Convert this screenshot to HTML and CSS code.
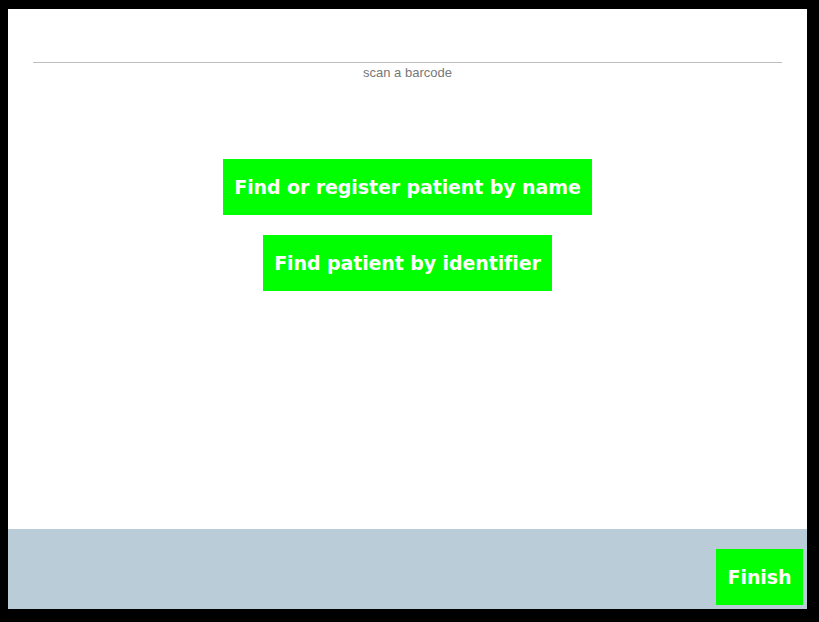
FILE: index.html
```html
<!DOCTYPE html>
<html>
<head>
<meta charset="utf-8">
<link rel="stylesheet" href="styles.css">
</head>
<body>
<div class="frame">
  <div class="main">
    <div class="scan">
      <div class="rule"></div>
      <div class="scan-label">scan a barcode</div>
    </div>
    <div class="actions">
      <button class="btn">Find or register patient by name</button>
      <button class="btn">Find patient by identifier</button>
    </div>
  </div>
  <div class="footer">
    <button class="btn btn-finish">Finish</button>
  </div>
</div>
</body>
</html>
```

FILE: styles.css
```css
html, body {
  margin: 0;
  padding: 0;
  background: #000;
  height: 100%;
}
body {
  padding: 9px 12px 13px 8px;
  box-sizing: border-box;
}
.frame {
  width: 799px;
  height: 600px;
  display: flex;
  flex-direction: column;
}
.main {
  background: #fff;
  height: 520px;
  display: flex;
  flex-direction: column;
  align-items: center;
}
.scan {
  width: 749px;
  padding-top: 53px;
  display: flex;
  flex-direction: column;
  align-items: center;
}
.rule {
  width: 100%;
  height: 1px;
  background: #bdbdbd;
}
.scan-label {
  font-family: "Liberation Sans", Arial, sans-serif;
  font-size: 13px;
  color: #777;
  line-height: 18px;
  margin-top: 1px;
}
.actions {
  margin-top: 77px;
  display: flex;
  flex-direction: column;
  align-items: center;
  gap: 20px;
}
.btn {
  background: #00ff00;
  color: #fff;
  border: none;
  height: 56px;
  padding: 0 11px;
  font-family: "DejaVu Sans", sans-serif;
  font-weight: bold;
  font-size: 19px;
  letter-spacing: -0.1px;
  margin: 0;
  cursor: pointer;
}
.footer {
  background: #bbccd9;
  height: 80px;
  display: flex;
  justify-content: flex-end;
  align-items: flex-end;
  padding: 0 4px 4px 0;
  box-sizing: border-box;
}
.btn-finish {
  width: 87px;
  padding: 0;
}
```
